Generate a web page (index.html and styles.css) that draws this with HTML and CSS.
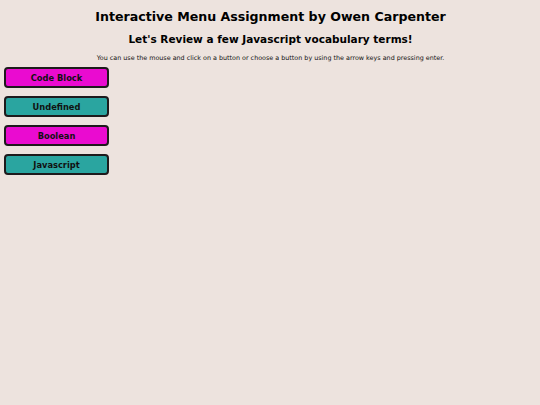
FILE: index.html
```html
<!DOCTYPE html>
<html>
<head>
<meta charset="utf-8">
<link rel="stylesheet" href="styles.css">
</head>
<body>
<h1 class="title">Interactive Menu Assignment by Owen Carpenter</h1>
<h2 class="subtitle">Let's Review a few Javascript vocabulary terms!</h2>
<p class="hint">You can use the mouse and click on a button or choose a button by using the arrow keys and pressing enter.</p>
<div class="menu">
  <button class="btn pink">Code Block</button>
  <button class="btn teal">Undefined</button>
  <button class="btn pink">Boolean</button>
  <button class="btn teal">Javascript</button>
</div>
</body>
</html>
```
FILE: styles.css
```css
html, body {
  margin: 0;
  padding: 0;
  background: #ede3de;
  font-family: "DejaVu Sans", Verdana, sans-serif;
  color: #000;
}
body {
  padding: 9px 3px 0 4px;
}
.title {
  margin: 0;
  font-size: 12.6px;
  text-align: center;
  line-height: 15px;
}
.subtitle {
  margin: 9px 0 0;
  font-size: 10.5px;
  text-align: center;
  line-height: 13px;
}
.hint {
  margin: 8px 0 0;
  font-size: 6.4px;
  text-align: center;
  line-height: 8px;
  color: #111;
}
.menu {
  margin-top: 5px;
  display: flex;
  flex-direction: column;
  gap: 8px;
  align-items: flex-start;
}
.btn {
  width: 105px;
  height: 21px;
  box-sizing: border-box;
  border: 2px solid #1e1a1c;
  border-radius: 4px;
  font-family: "DejaVu Sans", Verdana, sans-serif;
  font-weight: bold;
  font-size: 8.3px;
  color: #111;
  padding: 0;
}
.pink { background: #ea0bd0; }
.teal { background: #2aa5a0; }
```
